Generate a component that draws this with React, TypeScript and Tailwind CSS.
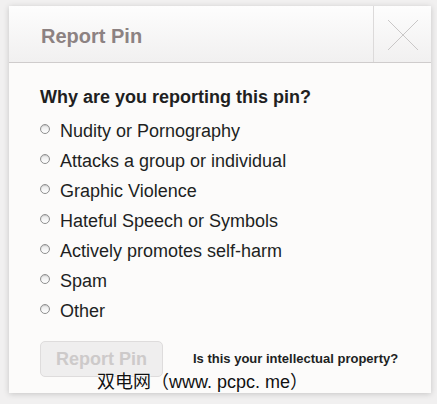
const reasons = [
  "Nudity or Pornography",
  "Attacks a group or individual",
  "Graphic Violence",
  "Hateful Speech or Symbols",
  "Actively promotes self-harm",
  "Spam",
  "Other",
];

function Radio() {
  return (
    <span className="mt-[3px] inline-block h-[10px] w-[10px] shrink-0 rounded-full border border-[#8f8f8f] bg-gradient-to-b from-[#e8e8e8] to-white shadow-[inset_0_1px_1px_rgba(0,0,0,0.15)]" />
  );
}

export default function App() {
  return (
    <div
      className="h-[404px] w-[437px] overflow-hidden bg-[#f1f0f0] pl-[9px] pt-[6px]"
      style={{ fontFamily: '"Liberation Sans", Arial, "Noto Sans CJK SC", sans-serif' }}
    >
      <div className="flex h-[387px] w-[422px] flex-col bg-[#fcfbfa] shadow-[0_1px_6px_rgba(0,0,0,0.18)]">
        <div className="flex h-[57px] shrink-0 border-b border-[#cfcccc] bg-gradient-to-b from-[#fdfdfd] to-[#f1f0f0]">
          <div className="flex flex-1 items-center pl-[32px] pt-[3px] text-[20px] font-bold text-[#8c8282]">
            Report Pin
          </div>
          <div className="flex w-[58px] items-center justify-center border-l border-[#dcdada]">
            <svg width="32" height="32" viewBox="0 0 32 32" className="mt-[1px]">
              <path d="M1 1L31 31M31 1L1 31" stroke="#c9c7c7" strokeWidth="1" fill="none" />
            </svg>
          </div>
        </div>
        <div className="flex flex-1 flex-col pl-[31px]">
          <div className="mt-[23px] text-[18px] font-bold leading-[22px] text-[#211f1f]">
            Why are you reporting this pin?
          </div>
          <ul className="mt-[13px] flex flex-col">
            {reasons.map((r) => (
              <li key={r} className="flex h-[30px] items-start gap-[10px] text-[18px] leading-[22px] text-[#211f1f]">
                <Radio />
                <span className="-mt-[1px]">{r}</span>
              </li>
            ))}
          </ul>
          <div className="mt-[10px] flex items-center">
            <button className="h-[36px] w-[123px] rounded-[5px] border border-[#dedcdc] bg-[#efeeee] text-[18px] font-bold text-[#cdcaca]">
              Report Pin
            </button>
            <span className="ml-[30px] text-[13px] font-bold text-[#211f1f]">
              Is this your intellectual property?
            </span>
          </div>
          <div className="-mt-[6px] ml-[57px] text-[18px] leading-[22px] text-[#111] [text-shadow:0_0_2px_#fff,0_0_2px_#fff]">
            双电网（www. pcpc. me）
          </div>
        </div>
      </div>
    </div>
  );
}
